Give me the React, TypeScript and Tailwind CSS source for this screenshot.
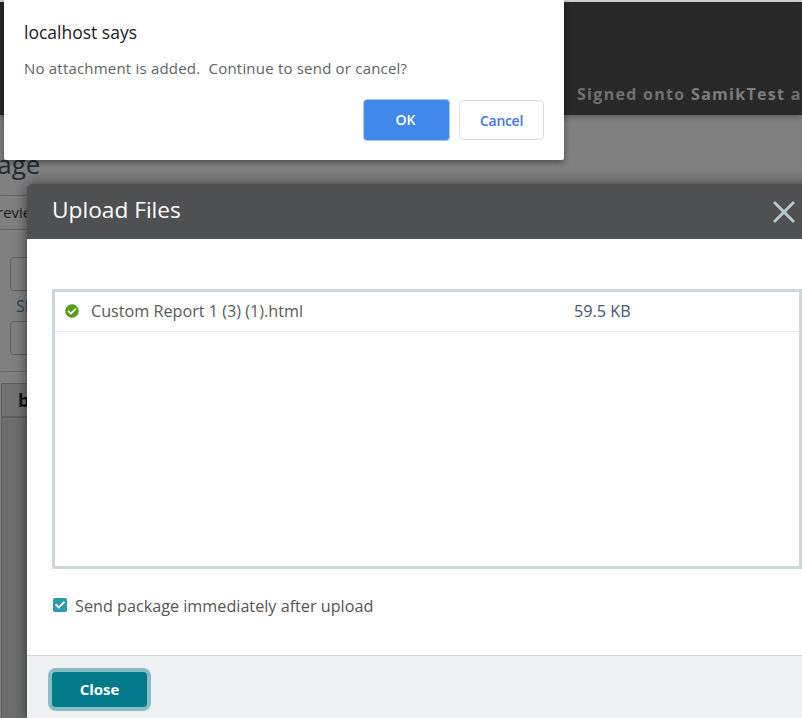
import { FaCheck, FaCheckCircle } from 'react-icons/fa'

const font = "font-['Open_Sans',sans-serif]"

function PageBehind() {
  return (
    <div className="flex flex-col">
      <div className="h-[2px] bg-[#d8d8d8]" />
      {/* top bar */}
      <header className="h-[113px] bg-[#282828] pl-[577px] pt-[81px] shadow-[0_2px_6px_rgba(0,0,0,0.3)]">
        <p className="whitespace-nowrap text-[16px] leading-[22px] font-bold tracking-[1.3px] text-[#6e7072]">
          Signed onto <span className="text-[#7d7d7d]">SamikTest</span> as
        </p>
      </header>
      <h1 className="-ml-[59px] mt-[29px] h-[51px] text-[26px] leading-[40px] font-medium text-[#1f2a33] whitespace-nowrap">
        Package
      </h1>
      <div className="-ml-[12px] flex h-[35px] items-center border-y border-[#666] text-[15px] text-[#1c1c1c] whitespace-nowrap">
        Preview
      </div>
      <div className="ml-[10px] mt-[27px] h-[34px] w-[60px] rounded-[4px] border border-[#5f5f5f]" />
      <p className="ml-[16px] mt-[2px] h-[28px] text-[16px] leading-[26px] text-[#1e4a5c]">Slot</p>
      <div className="ml-[10px] h-[34px] w-[60px] rounded-[4px] border border-[#5f5f5f]" />
      <div className="mt-[16px] border-t border-[#6a6a6a] pl-[1px] pt-[11px]">
        <div className="h-[34px] w-[60px] border border-[#5f5f5f] bg-[#737373] pl-[16px] text-[18px] leading-[32px] font-bold text-[#111]">
          b
        </div>
        <div className="h-[320px] w-[60px] border border-[#5f5f5f] bg-[#6d6d6d]" />
      </div>
    </div>
  )
}

function UploadModal() {
  return (
    <div className="absolute left-[27px] top-[184px] flex h-[534px] w-[800px] flex-col rounded-tl-[3px] bg-white shadow-[0_0_14px_rgba(0,0,0,0.55)]">
      <div className="flex h-[55px] shrink-0 items-center justify-between rounded-tl-[3px] bg-[#4e5052] pl-[25px] pr-[31px]">
        <h2 className="-mt-[3px] text-[22.7px] leading-[32px] font-normal text-white">Upload Files</h2>
        <svg width="24" height="24" viewBox="0 0 24 24" fill="none" stroke="#b4c8d0" strokeWidth="3">
          <path d="M2 2 L22 22 M22 2 L2 22" />
        </svg>
      </div>
      <div className="flex-1 pl-[25px] pt-[50px]">
        <div className="h-[280px] w-[750px] border-[3px] border-[#cbd7da]">
          <div className="flex h-[40px] items-center border-b border-[#e4e8e9] pb-[2px] text-[16.2px] leading-[20px]">
            <FaCheckCircle className="ml-[10px] mr-[12px] mt-[1px] text-[14px] text-[#5a9e1f]" />
            <span className="w-[483px] text-[#5a5a5a]">Custom Report 1 (3) (1).html</span>
            <span className="text-[#47596a]">59.5 KB</span>
          </div>
        </div>
        <label className="mt-[28px] flex items-center gap-[8px] pl-[1px] text-[16.2px] leading-[18px] text-[#555]">
          <span className="-mt-[2px] flex h-[14px] w-[14px] items-center justify-center rounded-[2px] bg-[#2a9cae]">
            <FaCheck className="text-[10px] text-white" />
          </span>
          Send package immediately after upload
        </label>
      </div>
      <div className="h-[63px] shrink-0 border-t border-[#cbd7da] bg-[#edf1f2] pl-[25px] pt-[16px]">
        <button className="h-[35px] w-[95px] rounded-[4px] bg-[#007a8a] text-[15px] font-bold text-white ring-[4px] ring-[#8abcc4]">
          Close
        </button>
      </div>
    </div>
  )
}

function AlertBox() {
  return (
    <div className="absolute left-[4px] top-0 h-[160px] w-[560px] rounded-b-[2px] bg-white pl-[20px] pr-[20px] pt-[20px] shadow-[0_2px_6px_rgba(0,0,0,0.45)]">
      <p className="text-[17.5px] leading-[24px] text-[#202124]">localhost says</p>
      <p className="mt-[14px] text-[15px] leading-[20px] tracking-[0.2px] text-[#5f6368]">
        No attachment is added.&nbsp; Continue to send or cancel?
      </p>
      <div className="mt-[21px] flex justify-end gap-[9px]">
        <button className="h-[42px] w-[87px] pb-[2px] pr-[2px] rounded-[4px] border border-[#a9c9f7] bg-[#4088ea] text-[14px] font-semibold text-white">
          OK
        </button>
        <button className="h-[40px] w-[85px] self-center rounded-[4px] border border-[#dadce0] bg-white text-[14px] font-semibold tracking-[-0.3px] text-[#3b78e7]">
          Cancel
        </button>
      </div>
    </div>
  )
}

export default function App() {
  return (
    <div className={`relative h-[718px] w-[802px] overflow-hidden bg-[#808080] ${font}`}>
      <PageBehind />
      <UploadModal />
      <AlertBox />
    </div>
  )
}
